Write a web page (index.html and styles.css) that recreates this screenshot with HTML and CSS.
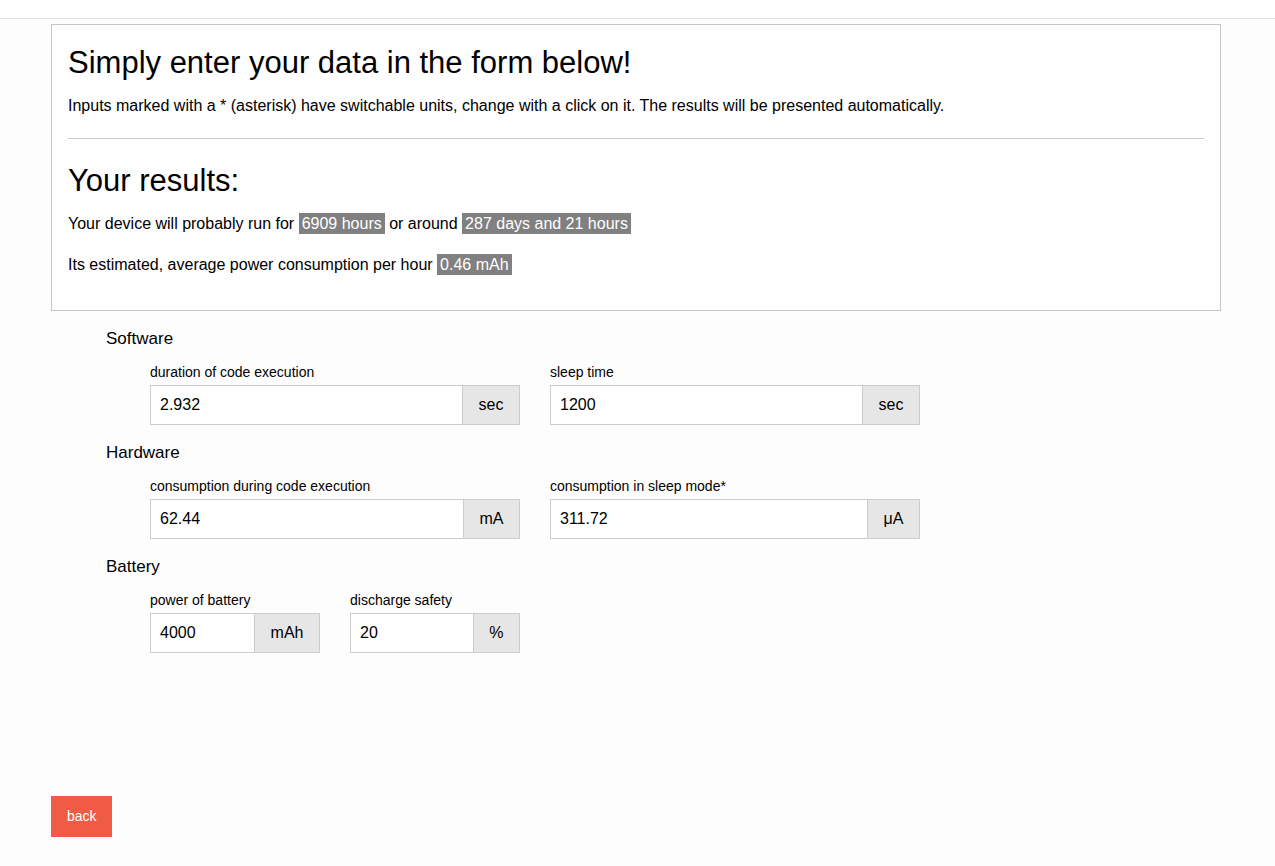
FILE: index.html
```html
<!DOCTYPE html>
<html lang="en">
<head>
<meta charset="utf-8">
<title>Battery runtime calculator</title>
<link rel="stylesheet" href="styles.css">
</head>
<body>
<header class="topbar"></header>
<main class="container">
  <section class="panel">
    <h1 class="title">Simply enter your data in the form below!</h1>
    <p class="intro">Inputs marked with a * (asterisk) have switchable units, change with a click on it. The results will be presented automatically.</p>
    <hr class="divider">
    <h2 class="title results-title">Your results:</h2>
    <p class="result first">Your device will probably run for <span class="hl">6909 hours</span> or around <span class="hl">287 days and 21 hours</span></p>
    <p class="result second">Its estimated, average power consumption per hour <span class="hl">0.46 mAh</span></p>
  </section>

  <form class="calc">
    <div class="group">
      <h3 class="group-title">Software</h3>
      <div class="row">
        <div class="field wide">
          <label class="label">duration of code execution</label>
          <div class="input-group"><input class="input" type="text" value="2.932"><span class="addon">sec</span></div>
        </div>
        <div class="field wide">
          <label class="label">sleep time</label>
          <div class="input-group"><input class="input" type="text" value="1200"><span class="addon">sec</span></div>
        </div>
      </div>
    </div>
    <div class="group">
      <h3 class="group-title">Hardware</h3>
      <div class="row">
        <div class="field wide">
          <label class="label">consumption during code execution</label>
          <div class="input-group"><input class="input" type="text" value="62.44"><span class="addon">mA</span></div>
        </div>
        <div class="field wide">
          <label class="label">consumption in sleep mode*</label>
          <div class="input-group"><input class="input" type="text" value="311.72"><span class="addon">μA</span></div>
        </div>
      </div>
    </div>
    <div class="group">
      <h3 class="group-title">Battery</h3>
      <div class="row">
        <div class="field narrow">
          <label class="label">power of battery</label>
          <div class="input-group"><input class="input" type="text" value="4000"><span class="addon">mAh</span></div>
        </div>
        <div class="field narrow">
          <label class="label">discharge safety</label>
          <div class="input-group"><input class="input" type="text" value="20"><span class="addon">%</span></div>
        </div>
      </div>
    </div>
  </form>

  <a class="back" href="#">back</a>
</main>
</body>
</html>
```
FILE: styles.css
```css
html, body {
  margin: 0;
  padding: 0;
}
body {
  background: #fdfdfd;
  color: #000;
  font-family: "Liberation Sans", Arial, sans-serif;
  font-size: 16px;
}
.topbar {
  height: 18px;
  background: #ffffff;
  border-bottom: 1px solid #e2e2e2;
}
.container {
  padding: 0 54px 30px 51px;
}
.panel {
  margin-top: 5px;
  border: 1px solid #c6c6c6;
  padding: 0 16px 34px;
  background: #fefefe;
}
.title {
  font-size: 31px;
  font-weight: normal;
  line-height: 36px;
  margin: 0;
}
.panel h1.title {
  margin-top: 20px;
}
.intro {
  margin: 14px 0 0;
  line-height: 22px;
}
.divider {
  margin: 21px 0 0;
  border: 0;
  border-top: 1px solid #cccccc;
  height: 0;
}
.results-title {
  margin-top: 24px;
}
.result {
  margin: 0;
  line-height: 22px;
}
.result.first {
  margin-top: 14px;
}
.result.second {
  margin-top: 19px;
}
.hl {
  background: #808080;
  color: #ffffff;
  padding: 2px 3px;
}

.calc {
  margin-left: 55px;
}
.group {
  margin-top: 16px;
}
.group:first-child {
  margin-top: 16px;
}
.group-title {
  margin: 0;
  font-size: 17px;
  font-weight: normal;
  line-height: 24px;
}
.row {
  display: flex;
  gap: 30px;
  margin-left: 44px;
  margin-top: 12px;
}
.field {
  display: flex;
  flex-direction: column;
}
.field.wide {
  width: 370px;
}
.field.narrow {
  width: 170px;
}
.label {
  font-size: 14px;
  line-height: 18px;
  margin-bottom: 4px;
}
.input-group {
  display: flex;
  height: 40px;
}
.input {
  flex: 1;
  min-width: 0;
  margin: 0;
  border: 1px solid #cccccc;
  background: #ffffff;
  padding: 0 9px;
  font-family: inherit;
  font-size: 16px;
  color: #000;
  box-sizing: border-box;
  height: 40px;
  outline: none;
}
.addon {
  display: flex;
  align-items: center;
  justify-content: center;
  padding: 0 15.5px;
  background: #e6e6e6;
  border: 1px solid #cccccc;
  border-left: 0;
  font-size: 16px;
  box-sizing: border-box;
}
.back {
  display: inline-block;
  margin-top: 143px;
  background: #ef5b45;
  color: #ffffff;
  font-size: 14px;
  line-height: 41px;
  padding: 0 15px 0 16px;
  text-decoration: none;
}
```
